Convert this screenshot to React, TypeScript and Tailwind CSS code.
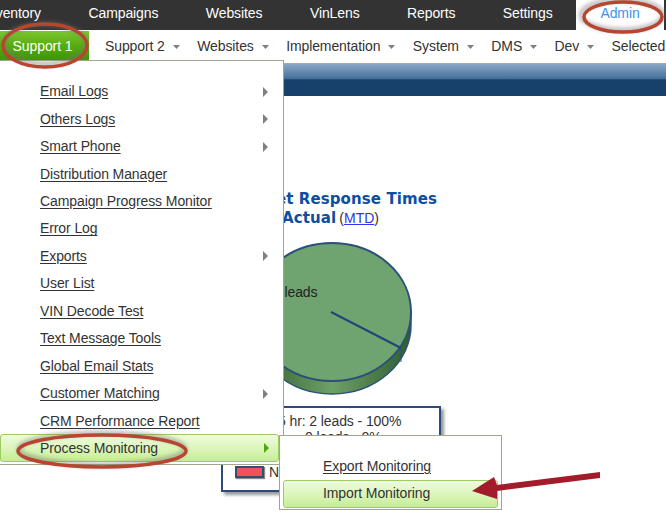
import type { ReactNode } from 'react';

const topLinks = ['Inventory', 'Campaigns', 'Websites', 'VinLens', 'Reports', 'Settings'];
const subLinks = ['Support 2', 'Websites', 'Implementation', 'System', 'DMS', 'Dev'];

const menuItems = [
  { label: 'Email Logs', more: true },
  { label: 'Others Logs', more: true },
  { label: 'Smart Phone', more: true },
  { label: 'Distribution Manager' },
  { label: 'Campaign Progress Monitor' },
  { label: 'Error Log' },
  { label: 'Exports', more: true },
  { label: 'User List' },
  { label: 'VIN Decode Test' },
  { label: 'Text Message Tools' },
  { label: 'Global Email Stats' },
  { label: 'Customer Matching', more: true },
  { label: 'CRM Performance Report' },
];

const greenRow =
  'bg-gradient-to-b from-[#eefbdc] via-[#dcf6bc] to-[#c6ec96] border border-[#9ccb62] rounded-[3px] text-[#333]';

function Caret() {
  return (
    <svg width="7" height="4" viewBox="0 0 7 4" className="block mt-px">
      <path d="M0 0H7L3.5 4Z" fill="#808080" />
    </svg>
  );
}

function SideArrow({ green = false }: { green?: boolean }) {
  return (
    <span
      className={`absolute left-[263px] top-1/2 -translate-y-1/2 w-0 h-0 border-y-[5px] border-y-transparent border-l-[5px] ${
        green ? 'border-l-[#4aa80c]' : 'border-l-[#808080]'
      }`}
    />
  );
}

function MenuRow({ children, more }: { children: ReactNode; more?: boolean }) {
  return (
    <div className="relative h-[27.46px] flex items-center pl-10 underline underline-offset-2 text-[#333]">
      {children}
      {more && <SideArrow />}
    </div>
  );
}

function Pie() {
  return (
    <svg width="220" height="160" viewBox="0 0 220 160" className="block">
      <defs>
        <linearGradient id="pieSide" x1="0" x2="1" y1="0" y2="0">
          <stop offset="0" stopColor="#2f5c2f" />
          <stop offset="0.5" stopColor="#6fa066" />
          <stop offset="1" stopColor="#2f5c2f" />
        </linearGradient>
      </defs>
      <path
        d="M32 74 V87 A79 69 0 0 0 190 87 V74 Z"
        fill="url(#pieSide)"
        stroke="#2b5079"
        strokeWidth="1.5"
      />
      <ellipse cx="111" cy="74" rx="79" ry="69" fill="#6fa470" stroke="#2b5079" strokeWidth="2" />
      <path d="M110 74 L180 110" stroke="#1f4675" strokeWidth="2" fill="none" />
      <path d="M180 110 V124" stroke="#2b5079" strokeWidth="1" fill="none" />
      <text x="52" y="59" fontSize="14" fill="#222" fontFamily="'Liberation Sans', Arial, sans-serif">
        2 leads
      </text>
    </svg>
  );
}

export default function App() {
  return (
    <div className="relative w-[666px] h-[516px] overflow-hidden bg-white font-['Liberation_Sans',Arial,sans-serif] text-[14px] tracking-[-0.1px] text-[#333]">
      {/* top nav */}
      <nav className="flex h-[30px] bg-[#333] text-white whitespace-nowrap overflow-hidden">
        <div className="flex -ml-[39.5px] items-center">
          {topLinks.map((l) => (
            <a key={l} className="px-[23.75px] leading-[26px] pb-1">
              {l}
            </a>
          ))}
          <a className="px-6 h-[30px] bg-white text-[#3b94ee] leading-[26px]">Admin</a>
        </div>
      </nav>

      {/* second nav */}
      <nav className="flex h-[33px] items-start whitespace-nowrap">
        <a className="mt-px w-[89px] h-[29px] shrink-0 bg-gradient-to-b from-[#7cc62f] via-[#56ad0f] to-[#3f9406] text-white text-center leading-[30px] pr-[4px]">
          Support 1
        </a>
        <div className="flex items-center h-[32px] pl-4 gap-[17.4px]">
          {subLinks.map((l) => (
            <span key={l} className="flex items-center gap-2">
              {l}
              <Caret />
            </span>
          ))}
          <span>Selected</span>
        </div>
      </nav>

      {/* page title bar */}
      <div className="h-[33px] border-t border-[#a9a89a] bg-gradient-to-b from-[#8ba7c5] via-[#44719b] via-45% to-[#17406b] to-50%" />

      {/* chart */}
      <main className="ml-[221px] w-[220px] pt-[94px]">
        <div className="font-['DejaVu_Sans',Verdana,sans-serif] font-bold text-[15px] leading-[18.5px] tracking-[0.1px] text-[#0b4ea2] whitespace-nowrap">
          <div className="text-right -mr-[-4px]">Internet Response Times</div>
          <div className="flex justify-end pr-[62px]">
            <span>vs. Actual</span>
            <span className="ml-[3px] font-['Liberation_Sans',Arial,sans-serif] font-normal text-[14px] tracking-normal text-[#333]">
              (<a className="underline text-[#3333ee]">MTD</a>)
            </span>
          </div>
        </div>
        <div className="mt-[11px]">
          <Pie />
        </div>
        <div className="mt-[8px] h-[86px] border-2 border-[#2c4a7c] shadow-[3px_3px_3px_#999] pl-[55px] pt-[5px] leading-[16px] whitespace-nowrap">
          <div>5 hr: 2 leads - 100%</div>
          <div className="pl-[27px]">0 leads - 0%</div>
          <div className="flex items-center gap-[5px] -ml-[43px] mt-[19px]">
            <span className="w-[29px] h-[12px] bg-[#f2505a] border-2 border-[#3a4a70] shadow-[1px_1px_1px_#888]" />
            <span>Not</span>
          </div>
        </div>
      </main>

      {/* dropdown menu */}
      <div className="absolute left-0 top-[60px] w-[284px] h-[405px] bg-white border-t border-r border-b border-[#a5a58d] pt-[17px]">
        {menuItems.map((m) => (
          <MenuRow key={m.label} more={m.more}>
            {m.label}
          </MenuRow>
        ))}
        <div className={`relative h-[28px] w-[279px] -mt-[0.5px] flex items-center pl-[39px] ${greenRow}`}>
          Process Monitoring
          <SideArrow green />
        </div>
      </div>

      {/* flyout */}
      <div className="absolute left-[279px] top-[435px] w-[223px] h-[75px] bg-white border border-[#a5a58d] px-[3px] pt-[21px]">
        <div className="h-[23px] pl-10 underline underline-offset-2 leading-[18px]">Export Monitoring</div>
        <div className={`h-[28px] w-[215px] pl-[39px] leading-[25px] ${greenRow}`}>Import Monitoring</div>
      </div>

      {/* annotations */}
      <svg width="666" height="516" viewBox="0 0 666 516" className="absolute inset-0 pointer-events-none" fill="none">
        <defs>
          <filter id="soft" x="-20%" y="-40%" width="140%" height="180%">
            <feGaussianBlur stdDeviation="2" />
          </filter>
        </defs>
        <g stroke="#777" strokeWidth="4" opacity="0.6" filter="url(#soft)">
          <ellipse cx="45" cy="44" rx="41" ry="20" />
          <ellipse cx="622" cy="15" rx="41" ry="15" />
          <ellipse cx="102" cy="449" rx="83" ry="16" />
        </g>
        <g stroke="#b8452f" strokeWidth="3.5">
          <ellipse cx="45" cy="45.5" rx="42" ry="21.5" />
          <ellipse cx="623" cy="17" rx="39" ry="15" />
          <ellipse cx="102" cy="451" rx="84" ry="16" />
        </g>
        <path d="M600 472 L497 485 L494 477 L472 491 L497 499 L497 491 L600 478 Z" fill="#a31c2b" />
      </svg>
    </div>
  );
}
